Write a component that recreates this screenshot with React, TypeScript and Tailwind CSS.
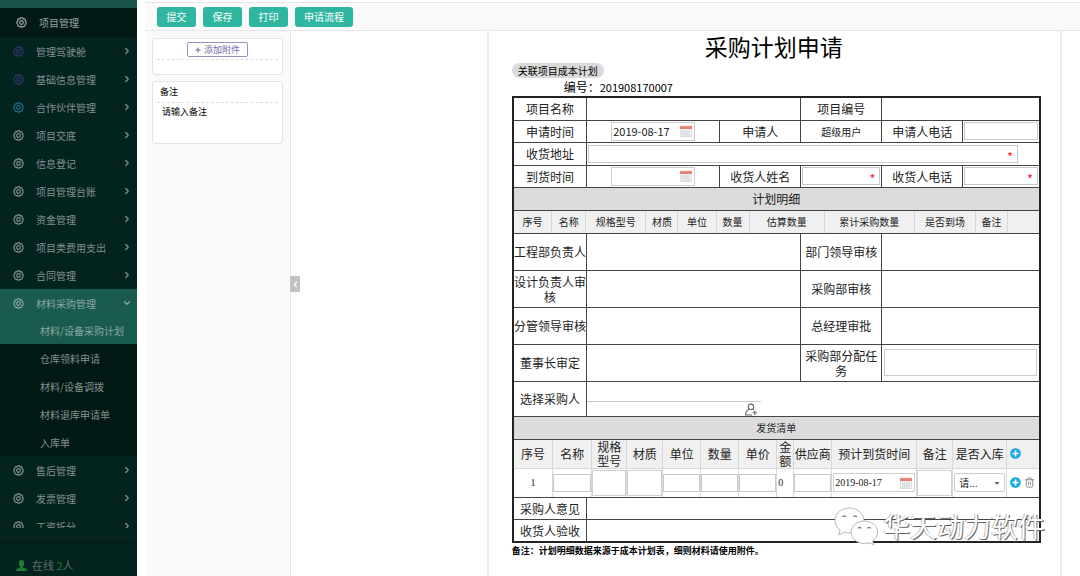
import type { ReactNode } from 'react';
import { useState } from 'react';
import { ChevronDown, ChevronLeft, ChevronRight, Trash2 } from 'lucide-react';
import { FaCaretDown, FaPlus, FaPlusCircle } from 'react-icons/fa';

type MenuItem = { label: string; color?: string };

const topMenu: MenuItem[] = [
  { label: '管理驾驶舱', color: 'text-[#35366a]' },
  { label: '基础信息管理', color: 'text-[#35366a]' },
  { label: '合作伙伴管理', color: 'text-[#1f6f8a]' },
  { label: '项目交底' },
  { label: '信息登记' },
  { label: '项目管理台账' },
  { label: '资金管理' },
  { label: '项目类费用支出' },
  { label: '合同管理' },
];

const subMenu = ['仓库领料申请', '材料/设备调拨', '材料退库申请单', '入库单'];

const bottomMenu: MenuItem[] = [{ label: '售后管理' }, { label: '发票管理' }, { label: '工资拆分' }];

const planColumns = [
  { label: '序号', width: 38 },
  { label: '名称', width: 34 },
  { label: '规格型号', width: 60 },
  { label: '材质', width: 32 },
  { label: '单位', width: 38 },
  { label: '数量', width: 33 },
  { label: '估算数量', width: 75 },
  { label: '累计采购数量', width: 90 },
  { label: '是否到场', width: 61 },
  { label: '备注', width: 32 },
  { label: '', width: 31 },
];

const deliveryColumns = [
  { label: '序号', width: 39 },
  { label: '名称', width: 39 },
  { label: '规格型号', width: 35 },
  { label: '材质', width: 36 },
  { label: '单位', width: 38 },
  { label: '数量', width: 38 },
  { label: '单价', width: 38 },
  { label: '金额', width: 17 },
  { label: '供应商', width: 38 },
  { label: '预计到货时间', width: 85 },
  { label: '备注', width: 36 },
  { label: '是否入库', width: 54 },
];

function GearIcon({ className = '' }: { className?: string }) {
  return (
    <svg viewBox="0 0 24 24" className={`size-[11px] shrink-0 ${className}`} fill="none" stroke="currentColor" strokeWidth="2.400" strokeLinejoin="round">
      <path d="M9.500 2h5l1 2.200 2.300-.6 3 3.400-.8 2.300 2 1.200v4l-2.200 1.200.6 2.300-3.200 3-2.400-.8L13.500 22h-3l-1.500-2-2.400.8-3.200-3 .6-2.300L2 14.300v-4l2-1.200L3.200 7l3-3.400 2.300.6z" />
      <circle cx="12" cy="12" r="4" />
    </svg>
  );
}

function CalendarIcon() {
  return (
    <svg viewBox="0 0 12 12" className="size-3 shrink-0">
      <rect x="0.500" y="1.500" width="11" height="10" fill="#f4f4f4" stroke="#dedede" />
      <path d="M0 1h12v3H0z" fill="#e5806f" />
      <path d="M2 0v2M4.500 0v2M7.500 0v2M10 0v2" stroke="#f3b9ae" />
      <path d="M2 6h8M2 8h8M2 10h8" stroke="#c4c4cc" strokeDasharray="1.500 0.600" />
    </svg>
  );
}

function UserPlusIcon() {
  return (
    <svg viewBox="0 0 24 24" className="size-[13px]" fill="none" stroke="#666" strokeWidth="2">
      <circle cx="11" cy="7" r="5" />
      <path d="M8 11.500C4 13 1 16 1 22h12M14 11.500c1 .4 2 1 2.500 1.500M18 14v8M14 18h8" />
    </svg>
  );
}

function WechatIcon() {
  return (
    <svg viewBox="0 0 44 38" className="h-[38px] w-11" fill="#fff" stroke="#a5a5a5" strokeWidth="0.800">
      <path d="M15.500 1C7.500 1 1 6.500 1 13.500c0 4 2 7.300 5.200 9.600L4.800 28l5.400-2.800c1.700.5 3.500.8 5.300.8C23.500 26 30 20.500 30 13.500S23.500 1 15.500 1z" />
      <path d="M30.500 14C23 14 17 19 17 25.200s6 11.300 13.500 11.300c1.700 0 3.200-.2 4.700-.7l4.600 2-1.200-4c3-2 5-5 5-8.600C43.600 19 38 14 30.500 14z" />
      <path d="M8.500 10a1.800 1.800 0 0 1 3.400 0M19.500 10a1.800 1.800 0 0 1 3.400 0M24 21.500a1.600 1.600 0 0 1 3.100 0M33.500 21.500a1.600 1.600 0 0 1 3.100 0" fill="none" stroke="#777" strokeWidth="1.200" />
    </svg>
  );
}

function MenuRow({ label, color = '' }: MenuItem) {
  return (
    <button type="button" className="flex h-7 w-full shrink-0 items-center pr-[5px] pl-[13px] text-left">
      <GearIcon className={color} />
      <span className="ml-3 flex-1">{label}</span>
      <ChevronRight className="size-[10px]" strokeWidth={3} />
    </button>
  );
}

function Sidebar() {
  return (
    <aside className="flex h-screen w-[137px] shrink-0 flex-col overflow-hidden bg-[#03231f] text-[10px] text-[#84918f]">
      <div className="h-2 shrink-0 bg-[#1b5549]" />
      <div className="flex h-[29px] shrink-0 items-center bg-[#021916] pl-4 text-[#9aa5a3]">
        <GearIcon />
        <span className="ml-3">项目管理</span>
      </div>
      <nav className="flex min-h-0 flex-1 flex-col overflow-hidden">
        {topMenu.map((item) => (
          <MenuRow key={item.label} {...item} />
        ))}
        <div className="shrink-0 bg-[#1a5b50] text-[#8ba6a1]">
          <button type="button" className="flex h-7 w-full items-center pr-[5px] pl-[13px] text-left">
            <GearIcon />
            <span className="ml-3 flex-1">材料采购管理</span>
            <ChevronDown className="size-[10px]" strokeWidth={3} />
          </button>
          <a href="#plan" className="flex h-[27px] items-center pl-10 whitespace-nowrap">材料/设备采购计划</a>
        </div>
        <div className="shrink-0 bg-[#021916]">
          {subMenu.map((label) => (
            <a key={label} href="#sub" className="flex h-7 items-center pl-10">{label}</a>
          ))}
        </div>
        {bottomMenu.map((item) => (
          <MenuRow key={item.label} {...item} />
        ))}
      </nav>
      <div className="mt-[14px] flex h-[34px] shrink-0 items-center border-t border-[#021714] pt-3 pl-4 text-[11px] text-[#5e6d6b]">
        <svg viewBox="0 0 12 12" className="mr-[5px] size-[11px]" fill="#1f7a34">
          <path d="M6 0c2 0 3 1.400 3 3.200S8 7 7.300 7.300c0 1 1 1.200 2.700 1.700C11.500 9.400 12 10.500 12 12H0c0-1.500.5-2.600 2-3 1.700-.5 2.700-.7 2.700-1.700C4 7 3 5 3 3.200S4 0 6 0z" />
        </svg>
        <span>在线 <span className="text-[#1f7a34]">2</span>人</span>
      </div>
    </aside>
  );
}

function Toolbar() {
  return (
    <header className="mt-[2px] flex h-[29px] shrink-0 items-center gap-[7px] border-y border-[#e6e6e6] bg-[#fafafa] pl-3">
      {['提交', '保存', '打印', '申请流程'].map((label) => (
        <button key={label} type="button" className="h-5 min-w-[39px] rounded-[3px] bg-[#2fb6a1] px-[9px] text-[10px] text-white">
          {label}
        </button>
      ))}
    </header>
  );
}

function NotesPanel() {
  return (
    <div className="w-[146px] shrink-0 border-r border-[#e6e6e6] bg-[#fafafa] px-[7px] pt-[7px] text-[9px]">
      <section className="h-[37px] rounded-[3px] border border-[#e4e4e4] bg-white px-1 pt-[3px]">
        <div className="flex justify-center border-b border-dashed border-[#ddd] pb-[2px]">
          <button type="button" className="flex h-[15px] w-[61px] items-center justify-center gap-[3px] rounded-[2px] border border-[#9a90c0] text-[#7468a8]">
            <FaPlus className="size-[6px]" />
            添加附件
          </button>
        </div>
      </section>
      <section className="mt-[6px] h-[63px] rounded-[3px] border border-[#e4e4e4] bg-white px-1">
        <label htmlFor="remark" className="flex h-[21px] items-center border-b border-dashed border-[#ddd] pl-[3px]">备注</label>
        <textarea id="remark" placeholder="请输入备注" className="block h-8 w-full resize-none px-[5px] pt-[2px] placeholder:text-black" />
      </section>
    </div>
  );
}

function Label({ children, colSpan }: { children: ReactNode; colSpan?: number }) {
  return (
    <th colSpan={colSpan} className="border border-[#444] p-0 text-center leading-[15px] font-normal">
      {children}
    </th>
  );
}

function Cell({ children, colSpan, className = '' }: { children?: ReactNode; colSpan?: number; className?: string }) {
  return (
    <td colSpan={colSpan} className={`border border-[#444] p-0 ${className}`}>
      {children}
    </td>
  );
}

function TextField({ label, required }: { label: string; required?: boolean }) {
  return (
    <div className="mx-px flex h-[18px] items-center border border-[#c9c9c9] bg-white pr-1">
      <input aria-label={label} className="h-4 w-full min-w-0 px-1 text-[11px] outline-none" />
      {required && <span className="pt-1 text-[10px] leading-none font-bold text-red-500">*</span>}
    </div>
  );
}

function DateField({ label, value = '' }: { label: string; value?: string }) {
  return (
    <div className="mx-auto flex h-[19px] w-[84px] items-center border border-[#ccc] pr-[2px] pl-px">
      <input aria-label={label} defaultValue={value} className="h-4 w-full min-w-0 text-[11px] outline-none" />
      <CalendarIcon />
    </div>
  );
}

function PlanTable() {
  return (
    <table className="w-full table-fixed border-collapse bg-[#f0f0f0] text-[10px]">
      <colgroup>
        {planColumns.map((col, i) => (
          <col key={i} style={{ width: col.width }} />
        ))}
      </colgroup>
      <thead>
        <tr className="h-[22px]">
          {planColumns.map((col, i) => (
            <th key={i} className="border-r border-[#d8d8d8] p-0 font-normal whitespace-nowrap last:border-r-0">{col.label}</th>
          ))}
        </tr>
      </thead>
    </table>
  );
}

function DeliveryTable() {
  const [stored, setStored] = useState('');
  const cell = 'border-r border-[#d8d8d8] p-0 last:border-r-0';
  const small = 'block h-[18px] w-full border border-[#c9c9c9] outline-none';
  const tall = 'block h-[26px] w-full border border-[#d0d0d0] outline-none';

  return (
    <table className="w-full table-fixed border-collapse">
      <colgroup>
        {deliveryColumns.map((col) => (
          <col key={col.label} style={{ width: col.width }} />
        ))}
        <col style={{ width: 32 }} />
      </colgroup>
      <thead>
        <tr className="h-[29px] border-b border-[#d8d8d8] bg-[#f0f0f0]">
          {deliveryColumns.map((col) => (
            <th key={col.label} className={`${cell} leading-[14px] font-normal`}>{col.label}</th>
          ))}
          <th className={`${cell} pl-[3px]`}>
            <button type="button" aria-label="添加行" className="block">
              <FaPlusCircle className="size-[11px] text-[#18a9e0]" />
            </button>
          </th>
        </tr>
      </thead>
      <tbody>
        <tr className="h-7 text-[10px]">
          <td className={`${cell} text-center font-['Liberation_Serif',serif]`}>1</td>
          <td className={cell}><input aria-label="名称" className={small} /></td>
          <td className={cell}><input aria-label="规格型号" className={tall} /></td>
          <td className={cell}><input aria-label="材质" className={tall} /></td>
          <td className={cell}><input aria-label="单位" className={small} /></td>
          <td className={cell}><input aria-label="数量" className={small} /></td>
          <td className={cell}><input aria-label="单价" className={small} /></td>
          <td className={`${cell} pl-px font-['Liberation_Serif',serif]`}>0</td>
          <td className={cell}><input aria-label="供应商" className={small} /></td>
          <td className={cell}>
            <div className="mx-px flex h-[19px] items-center border border-[#d0d0d0] pr-[2px] pl-px">
              <input aria-label="预计到货时间" defaultValue="2019-08-17" className="w-full min-w-0 font-['Liberation_Serif',serif] text-[10px] outline-none" />
              <CalendarIcon />
            </div>
          </td>
          <td className={cell}><input aria-label="备注" className={tall} /></td>
          <td className={cell}>
            <div className="relative mx-px">
              <select
                aria-label="是否入库"
                value={stored}
                onChange={(e) => setStored(e.target.value)}
                className="block h-[19px] w-full appearance-none rounded-[2px] border border-[#ccc] bg-white pl-1"
              >
                <option value="">请...</option>
                <option value="yes">是</option>
                <option value="no">否</option>
              </select>
              <FaCaretDown className="pointer-events-none absolute top-[6px] right-1 size-2 text-[#666]" />
            </div>
          </td>
          <td className={`${cell} pl-[3px]`}>
            <div className="flex items-center gap-[3px]">
              <button type="button" aria-label="添加行"><FaPlusCircle className="block size-[11px] text-[#18a9e0]" /></button>
              <button type="button" aria-label="删除行"><Trash2 className="block size-[11px] text-[#888]" /></button>
            </div>
          </td>
        </tr>
      </tbody>
    </table>
  );
}

function RequestForm() {
  return (
    <table className="w-full table-fixed border-collapse border-2 border-[#222] text-[12px] text-[#222]">
      <colgroup>
        {[74, 133, 81, 81, 81, 77].map((width, i) => (
          <col key={i} style={{ width }} />
        ))}
      </colgroup>
      <tbody>
        <tr className="h-[23px]">
          <Label>项目名称</Label>
          <Cell colSpan={2} />
          <Label>项目编号</Label>
          <Cell colSpan={2} />
        </tr>
        <tr className="h-[22px]">
          <Label>申请时间</Label>
          <Cell><DateField label="申请时间" value="2019-08-17" /></Cell>
          <Label>申请人</Label>
          <Cell className="text-center text-[10px]">超级用户</Cell>
          <Label>申请人电话</Label>
          <Cell><TextField label="申请人电话" /></Cell>
        </tr>
        <tr className="h-[23px]">
          <Label>收货地址</Label>
          <Cell colSpan={5} className="pr-5"><TextField label="收货地址" required /></Cell>
        </tr>
        <tr className="h-[22px]">
          <Label>到货时间</Label>
          <Cell><DateField label="到货时间" /></Cell>
          <Label>收货人姓名</Label>
          <Cell><TextField label="收货人姓名" required /></Cell>
          <Label>收货人电话</Label>
          <Cell><TextField label="收货人电话" required /></Cell>
        </tr>
        <tr className="h-[23px] bg-[#dcdcdc]"><Label colSpan={6}>计划明细</Label></tr>
        <tr className="h-[23px]"><Cell colSpan={6}><PlanTable /></Cell></tr>
        <tr className="h-[37px]">
          <Label>工程部负责人</Label>
          <Cell colSpan={2} />
          <Label>部门领导审核</Label>
          <Cell colSpan={2} />
        </tr>
        <tr className="h-[37px]">
          <Label>设计负责人审核</Label>
          <Cell colSpan={2} />
          <Label>采购部审核</Label>
          <Cell colSpan={2} />
        </tr>
        <tr className="h-[37px]">
          <Label>分管领导审核</Label>
          <Cell colSpan={2} />
          <Label>总经理审批</Label>
          <Cell colSpan={2} />
        </tr>
        <tr className="h-[37px]">
          <Label>董事长审定</Label>
          <Cell colSpan={2} />
          <Label>采购部分配任务</Label>
          <Cell colSpan={2} className="px-[2px]">
            <input aria-label="采购部分配任务" className="block h-[27px] w-full border border-[#ccc] px-1 outline-none" />
          </Cell>
        </tr>
        <tr className="h-[35px]">
          <Label>选择采购人</Label>
          <Cell colSpan={5}>
            <div className="flex w-[174px] flex-col items-end">
              <input aria-label="选择采购人" className="block h-5 w-full border-b border-[#ccc] px-1 outline-none" />
              <button type="button" aria-label="选择人员" className="mt-px mr-[3px]"><UserPlusIcon /></button>
            </div>
          </Cell>
        </tr>
        <tr className="h-[23px] bg-[#dcdcdc] text-[10px]"><Label colSpan={6}>发货清单</Label></tr>
        <tr className="h-[58px]"><Cell colSpan={6}><DeliveryTable /></Cell></tr>
        <tr className="h-[22px]">
          <Label>采购人意见</Label>
          <Cell colSpan={5} />
        </tr>
        <tr className="h-[23px]">
          <Label>收货人验收</Label>
          <Cell colSpan={5} />
        </tr>
      </tbody>
    </table>
  );
}

export default function App() {
  return (
    <div className="flex h-screen overflow-hidden bg-white font-['Noto_Sans_CJK_SC',sans-serif] text-black">
      <Sidebar />
      <div className="ml-2 flex min-w-0 flex-1 flex-col">
        <Toolbar />
        <div className="flex min-h-0 flex-1">
          <NotesPanel />
          <main className="relative flex min-w-0 flex-1">
            <button type="button" aria-label="收起" className="absolute top-[245px] -left-px flex h-4 w-[10px] items-center justify-center bg-[#c2c2c2] text-white">
              <ChevronLeft className="size-[9px]" strokeWidth={3} />
            </button>
            <article className="mr-[18px] ml-[24.8%] min-w-0 flex-1 border-x-2 border-[#ececec] pr-[21px] pl-[23px]">
              <h1 className="pr-[3px] text-center text-[23px] leading-[31px]">采购计划申请</h1>
              <button type="button" className="mt-px block h-[15px] rounded-full bg-[#dadada] px-[6px] text-[10px] leading-[15px]">关联项目成本计划</button>
              <p className="pl-[52px] text-[12px] leading-[18px]">
                编号：<span className="text-[11px]">201908170007</span>
              </p>
              <div className="relative">
                <RequestForm />
                <div className="absolute -right-[6px] -bottom-[2px] flex items-center gap-[5px]">
                  <WechatIcon />
                  <span className="text-[27px] leading-[38px] whitespace-nowrap text-white [text-shadow:1px_1px_0_#666,-1px_0_0_#bbb]">华天动力软件</span>
                </div>
              </div>
              <p className="text-[9px] leading-[16px] font-bold">备注：计划明细数据来源于成本计划表，细则材料请使用附件。</p>
            </article>
          </main>
        </div>
      </div>
    </div>
  );
}
